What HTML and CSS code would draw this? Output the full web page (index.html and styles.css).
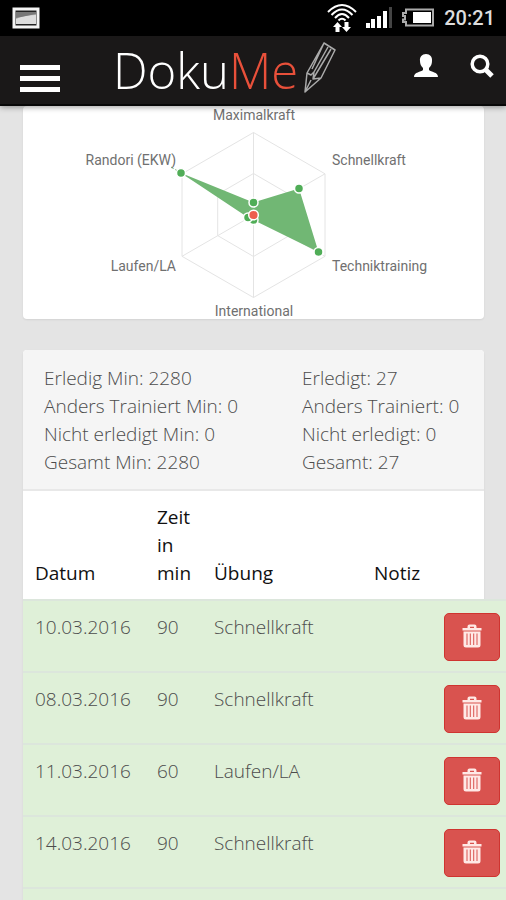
FILE: index.html
```html
<!DOCTYPE html>
<html lang="de">
<head>
<meta charset="utf-8">
<meta name="viewport" content="width=device-width, initial-scale=1">
<title>DokuMe</title>
<link rel="stylesheet" href="styles.css">
</head>
<body>
<svg class="sprite" aria-hidden="true">
  <symbol id="trash" viewBox="0 0 20 24">
    <path d="M5.500 4V2.500Q5.500 .500 7.500 .500H12.500Q14.500 .500 14.500 2.500V4H19.500V6.500H.500V4ZM8 4H12V2.800H8Z" fill-rule="evenodd"/>
    <path d="M1.500 7.500H18.500V21Q18.500 23.500 16 23.500H4Q1.500 23.500 1.500 21ZM4.500 9.500V21H5.500V9.500ZM7.800 9.500V21H8.800V9.500ZM11.200 9.500V21H12.200V9.500ZM14.500 9.500V21H15.500V9.500Z" fill-rule="evenodd"/>
  </symbol>
</svg>
<div class="status">
  <svg width="28" height="22" viewBox="0 0 28 22" aria-hidden="true">
    <rect x="2" y="2" width="24" height="18" fill="#222" stroke="#f4f4f4" stroke-width="3"/>
    <path d="M4 5H24V17H4Z" fill="#aaa"/><path d="M4 12Q12 8 24 8V17H4Z" fill="#ddd"/><path d="M4 5H24V7L4 11Z" fill="#777"/>
  </svg>
  <div class="status-right">
    <svg width="30" height="30" viewBox="0 0 30 30" fill="none" stroke="#fff" stroke-width="2" aria-hidden="true">
      <path d="M1 9Q15-5 29 9M4.500 12Q15 1 25.500 12M8 15Q15 7 22 15M11.500 17.500Q15 14 18.500 17.500"/>
      <path d="M10.500 19L15 24H12.500V29H8.500V24H6ZM19.500 29L15 24H17.500V19H21.500V24H24Z" fill="#fff" stroke="none"/>
    </svg>
    <svg width="28" height="22" viewBox="0 0 28 22" fill="#fff" aria-hidden="true">
      <path d="M1 16H5V21H1ZM6 12H10V21H6ZM12 9H16V21H12ZM18 4H22V21H18Z"/><path d="M24 0H27V21H24Z" fill="#444"/>
    </svg>
    <svg width="34" height="20" viewBox="0 0 34 20" aria-hidden="true">
      <path d="M5 1.500H32V17.500H5V14H2V11.500H4V8H2V5H5Z" fill="none" stroke="#aaa" stroke-width="2"/><path d="M12 4H30V15H12Z" fill="#fff"/>
    </svg>
    <span class="clock">20:21</span>
  </div>
</div>
<header class="navbar">
  <button class="menu" type="button" aria-label="Menü"><span></span><span></span><span></span></button>
  <a class="brand" href="#"><span>Doku<b>Me</b></span>
    <svg width="34" height="52" viewBox="0 0 34 52" fill="none" stroke="#aaa" stroke-width="1.500" stroke-linejoin="round" aria-hidden="true">
      <path d="M21 1L32 8L18 36L2 50L4 31ZM4 31L8 33L11 30L10 37L18 36M11 30L25 5M10 37L28 7M2 50L8 38M21 1L9 27"/>
    </svg>
  </a>
  <nav class="actions">
    <a href="#" aria-label="Profil"><svg width="24" height="24" viewBox="0 0 24 24" fill="#fff"><path d="M12 0C8 0 5.500 3 6 7C6 10 7 12 9 14V16C7 18 0 18 0 23H24C24 18 17 18 15 16V14C17 12 18 10 18 7C18.500 3 16 0 12 0Z"/></svg></a>
    <a href="#" aria-label="Suche"><svg width="24" height="24" viewBox="0 0 24 24" fill="none" stroke="#fff"><circle cx="10" cy="10" r="7.800" stroke-width="3.500"/><path d="M15.500 15.500L22 22" stroke-width="5"/></svg></a>
  </nav>
</header>
<main>
  <section class="card chart">
    <svg viewBox="23 106 461 213" role="img" aria-label="Trainingsverteilung">
      <g fill="none" stroke="#e4e4e4" stroke-width="1">
        <path d="M253.500 132.500L325 173.800V256.300L253.500 297.500L182 256.300V173.800Z"/>
        <path d="M253.500 173.500L289.300 194.300V235.600L253.500 256.500L217.700 235.600V194.300Z"/>
        <path d="M253.500 132.500V297.500M182 173.800L325 256.300M325 173.800L182 256.300"/>
      </g>
      <path d="M253.500 202.500L299 188.500L318.500 252L253.500 220L248 217.500L181 173Z" fill="#71b774"/>
      <path d="M171 167L181 173" stroke="#71b774" stroke-dasharray="3 2"/>
      <g fill="#50ad57" stroke="#fff" stroke-width="1.500">
        <circle cx="253.500" cy="202.500" r="4.500"/><circle cx="299" cy="188.500" r="4.500"/><circle cx="318.500" cy="252" r="4.500"/><circle cx="253.500" cy="220" r="4.500"/><circle cx="248" cy="217.500" r="4.500"/><circle cx="181" cy="173" r="4.500"/>
        <circle cx="253.500" cy="215" r="4.800" fill="#ed5d4e"/>
      </g>
      <g class="labels">
        <text x="254" y="120" text-anchor="middle">Maximalkraft</text>
        <text x="332" y="165">Schnellkraft</text>
        <text x="332" y="271">Techniktraining</text>
        <text x="254" y="316" text-anchor="middle">International</text>
        <text x="176" y="271" text-anchor="end">Laufen/LA</text>
        <text x="176" y="165" text-anchor="end">Randori (EKW)</text>
      </g>
    </svg>
  </section>
  <section class="card">
    <div class="summary">
      <div>Erledig Min: 2280<br>Anders Trainiert Min: 0<br>Nicht erledigt Min: 0<br>Gesamt Min: 2280</div>
      <div>Erledigt: 27<br>Anders Trainiert: 0<br>Nicht erledigt: 0<br>Gesamt: 27</div>
    </div>
    <table>
      <colgroup><col class="c-date"><col class="c-time"><col><col class="c-note"><col class="c-action"></colgroup>
      <thead><tr><th>Datum</th><th>Zeit in min</th><th>Übung</th><th>Notiz</th><th></th></tr></thead>
      <tbody>
        <tr><td>10.03.2016</td><td>90</td><td>Schnellkraft</td><td></td><td><button class="delete" type="button" aria-label="Löschen"><svg><use href="#trash"/></svg></button></td></tr>
        <tr><td>08.03.2016</td><td>90</td><td>Schnellkraft</td><td></td><td><button class="delete" type="button" aria-label="Löschen"><svg><use href="#trash"/></svg></button></td></tr>
        <tr><td>11.03.2016</td><td>60</td><td>Laufen/LA</td><td></td><td><button class="delete" type="button" aria-label="Löschen"><svg><use href="#trash"/></svg></button></td></tr>
        <tr><td>14.03.2016</td><td>90</td><td>Schnellkraft</td><td></td><td><button class="delete" type="button" aria-label="Löschen"><svg><use href="#trash"/></svg></button></td></tr>
        <tr><td></td><td></td><td></td><td></td><td><button class="delete" type="button" aria-label="Löschen"><svg><use href="#trash"/></svg></button></td></tr>
      </tbody>
    </table>
  </section>
</main>
</body>
</html>
```
FILE: styles.css
```css
* { box-sizing: border-box; }
html { overflow: hidden; }
body {
  margin: 0;
  height: 100vh;
  overflow: hidden;
  background: #e4e4e4;
  color: #4c4c4c;
  font: 300 19px/28px "Open Sans", "Noto Sans", sans-serif;
}
svg { display: block; }
.sprite { position: absolute; width: 0; height: 0; }
.status {
  display: flex;
  align-items: center;
  justify-content: space-between;
  height: 36px;
  padding: 0 11px 0 12px;
  background: #000;
}
.status-right { display: flex; align-items: center; gap: 8px; }
.clock { font: 500 20px/24px Roboto, sans-serif; color: #ddd; padding-left: 1px; }
.navbar {
  display: flex;
  align-items: center;
  height: 70px;
  padding: 0 12px 0 20px;
  background: #1a1818;
  border-bottom: 2px solid #080808;
  box-shadow: 0 1px 6px rgba(0, 0, 0, .4);
  position: relative;
}
.menu {
  display: grid;
  gap: 6px;
  width: 40px;
  padding: 0;
  margin-top: 16px;
  border: 0;
  background: none;
}
.menu span { height: 5px; background: #fff; }
.brand {
  display: flex;
  align-items: center;
  gap: 5px;
  margin-left: 53px;
  color: #fff;
  font-size: 49px;
  line-height: 64px;
  text-decoration: none;
}
.brand b { font-weight: 300; color: #e8503a; }
.brand svg { margin-bottom: 4px; }
.actions { display: flex; gap: 32px; margin: 0 0 8px auto; }
main { display: grid; gap: 31px; padding: 0 22px 0 23px; }
.card { min-width: 0; background: #fff; border-radius: 4px; box-shadow: 0 1px 2px rgba(0, 0, 0, .08); }
.chart svg { width: 100%; height: auto; }
.labels { font: 400 14px Roboto, sans-serif; fill: #707070; }
.summary {
  display: grid;
  grid-template-columns: 258fr 182fr;
  padding: 14px 0 13px 21px;
  background: #f5f5f5;
  border-bottom: 2px solid #e8e8e8;
  border-radius: 4px 4px 0 0;
  white-space: nowrap;
}
table { width: calc(100% + 27px); table-layout: fixed; border-collapse: collapse; }
.c-date { width: 122px; }
.c-time { width: 57px; }
.c-note { width: 70px; }
.c-action { width: 79px; }
th, td { padding: 12px 8px 12px 12px; text-align: left; }
th { vertical-align: bottom; color: #111; font-weight: 400; }
td { height: 72px; padding-bottom: 10px; vertical-align: top; background: #dff0d8; border-top: 2px solid #dce6dc; white-space: nowrap; }
.delete {
  display: grid;
  justify-content: center;
  width: 56px;
  height: 48px;
  padding: 10px 0;
  background: #d9534f;
  border: 1px solid #cf3430;
  border-radius: 5px;
}
.delete svg { width: 20px; height: 24px; fill: #ffe9e6; }
```
